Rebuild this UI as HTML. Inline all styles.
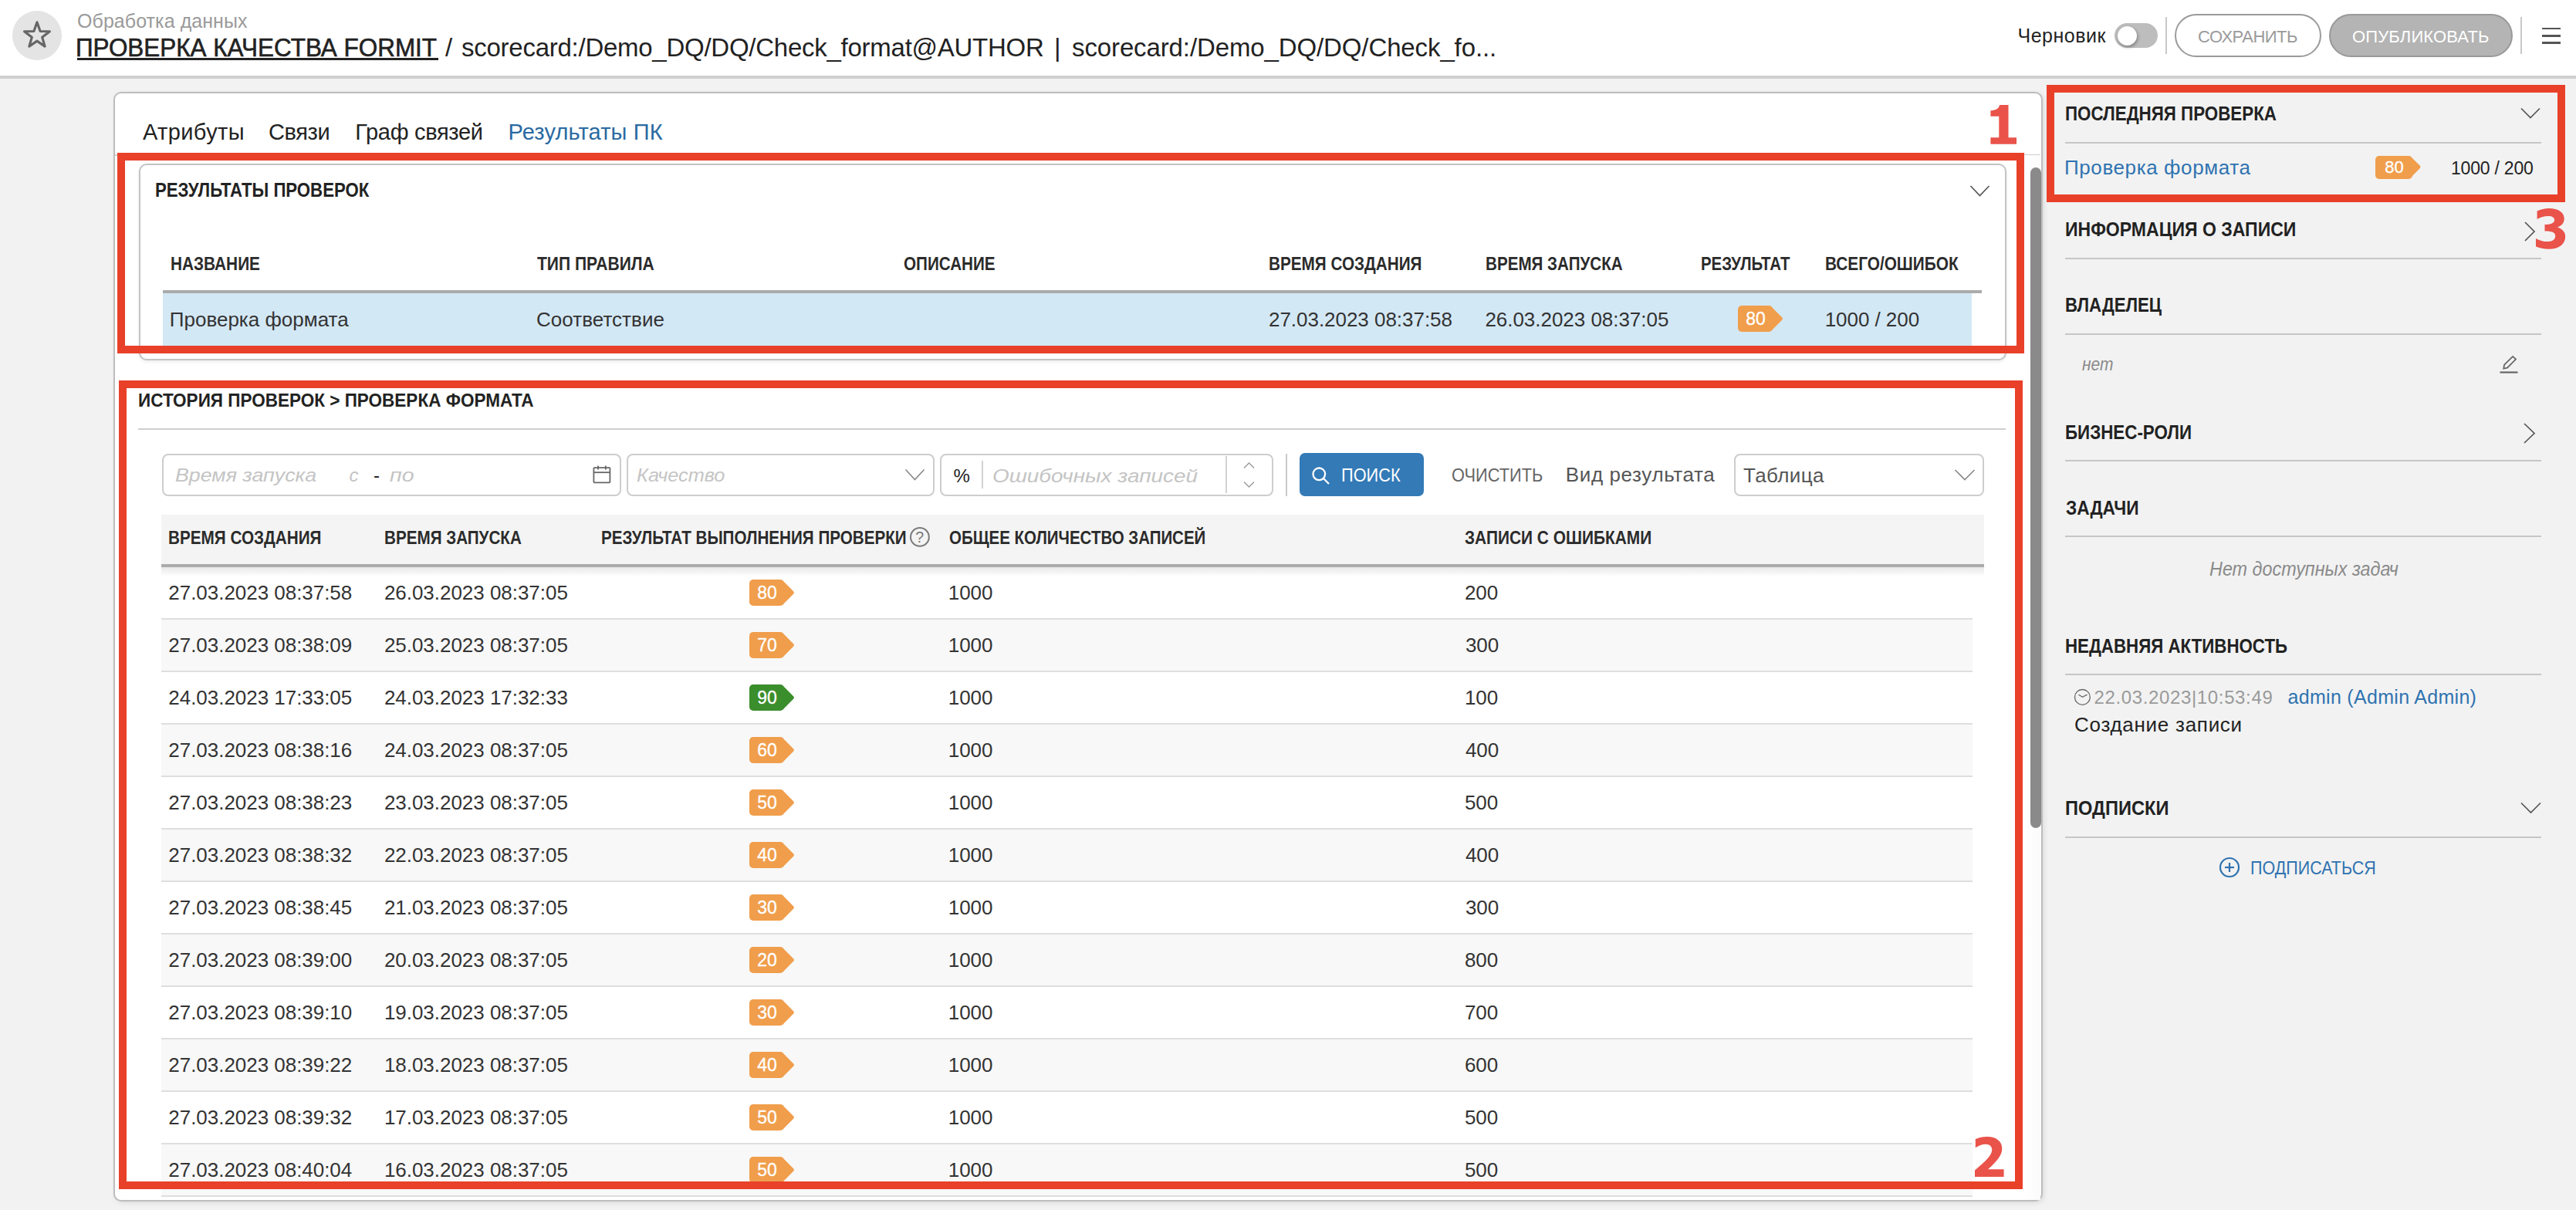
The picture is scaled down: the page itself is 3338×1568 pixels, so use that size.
<!DOCTYPE html>
<html><head><meta charset="utf-8">
<style>
html,body{margin:0;padding:0;}
body{width:3338px;height:1568px;position:relative;overflow:hidden;background:#f2f2f2;font-family:"Liberation Sans",sans-serif;}
.a{position:absolute;box-sizing:border-box;}
.t{position:absolute;white-space:nowrap;font-family:"Liberation Sans",sans-serif;}
.bdg{position:absolute;z-index:0;width:45px;height:34px;border-radius:5px;color:#fff;font:23px/34px "Liberation Sans",sans-serif;-webkit-text-stroke:0.3px #fff;text-align:center;padding-left:1px;box-sizing:border-box;}
.bdg::after{content:"";position:absolute;left:29.5px;top:5px;width:24px;height:24px;transform:rotate(45deg);border-radius:3px;background:inherit;z-index:-1;}
.bdg.o{background:#f09e4c;}
.bdg.b2{width:48px;height:30px;font-size:22px;line-height:30px;border-radius:5px;}
.bdg.b2::after{left:34.4px;top:4.4px;width:21.2px;height:21.2px;}
.bdg.g{background:#3b8e2c;}
.red{position:absolute;box-sizing:border-box;border:10px solid #e9402a;}
svg{position:absolute;overflow:visible;}
</style></head><body>
<!-- header -->
<div class="a" style="left:0;top:0;width:3338px;height:98px;background:#fff;"></div>
<div class="a" style="left:0;top:98px;width:3338px;height:4px;background:#d0d0d0;"></div>
<div class="a" style="left:16px;top:14px;width:64px;height:64px;border-radius:50%;background:#e4e4e4;"></div>
<svg style="left:0;top:0" width="100" height="100"><polygon points="48.00,28.80 52.11,40.44 64.45,40.75 54.66,48.26 58.17,60.10 48.00,53.10 37.83,60.10 41.34,48.26 31.55,40.75 43.89,40.44" fill="none" stroke="#666" stroke-width="3.1" stroke-linejoin="round"/></svg>
<div class="a" style="left:100px;top:75px;width:468px;height:3px;background:#222;"></div>
<!-- toggle -->
<div class="a" style="left:2740px;top:30px;width:56px;height:32px;border-radius:16px;background:#bdbdbd;"></div>
<div class="a" style="left:2743.5px;top:33.5px;width:25px;height:25px;border-radius:50%;background:#fff;box-shadow:1px 2px 4px rgba(0,0,0,.35);"></div>
<div class="a" style="left:2806px;top:22px;width:2px;height:48px;background:#c8c8c8;"></div>
<div class="a" style="left:2818px;top:18px;width:190px;height:56px;border-radius:28px;border:2px solid #9a9a9a;background:#fff;"></div>
<div class="a" style="left:3018px;top:18px;width:238px;height:56px;border-radius:28px;border:2px solid #999;background:#b4b4b4;"></div>
<div class="a" style="left:3266px;top:22px;width:2px;height:48px;background:#c8c8c8;"></div>
<div class="a" style="left:3294px;top:35.5px;width:24px;height:2.5px;background:#555;"></div>
<div class="a" style="left:3294px;top:45px;width:24px;height:2.5px;background:#555;"></div>
<div class="a" style="left:3294px;top:54px;width:24px;height:2.5px;background:#555;"></div>

<!-- right panel shadow -->


<!-- main card -->
<div class="a" style="left:147px;top:119px;width:2500px;height:1438px;border:2px solid #bdbdbd;border-radius:10px;background:#fff;box-shadow:2px 2px 6px rgba(0,0,0,.09);"></div>
<div class="a" style="left:149px;top:199.5px;width:2495px;height:2px;background:#cfcfcf;"></div>
<!-- scroll track -->
<div class="a" style="left:2622px;top:201px;width:22px;height:1354px;background:linear-gradient(to right,#fff,#fbfbfb);"></div>
<div class="a" style="left:2631px;top:217px;width:14px;height:856px;border-radius:7px;background:#8a8a8a;"></div>

<!-- section1 inner card -->
<div class="a" style="left:180px;top:212px;width:2420px;height:255px;border:2px solid #c4c4c4;border-radius:10px;background:#fff;box-shadow:0 2px 4px rgba(0,0,0,.08);"></div>
<div class="a" style="left:211px;top:375.5px;width:2357px;height:4px;background:#ababab;"></div>
<div class="a" style="left:211px;top:379.5px;width:2344px;height:70px;background:#d3e8f5;"></div>
<svg style="left:0;top:0" width="1" height="1"><polyline points="2553.5,241 2565.5,253.5 2577.5,241" fill="none" stroke="#555" stroke-width="1.7"/></svg>

<!-- section2 -->
<div class="a" style="left:179px;top:555px;width:2420px;height:2px;background:#cfcfcf;"></div>
<div class="a" style="left:210px;top:587.5px;width:595px;height:55px;border:2px solid #cdcdcd;border-radius:8px;background:#fff;"></div>
<div class="a" style="left:811.5px;top:587.5px;width:399px;height:55px;border:2px solid #cdcdcd;border-radius:8px;background:#fff;"></div>
<div class="a" style="left:1217.5px;top:587.5px;width:432px;height:55px;border:2px solid #cdcdcd;border-radius:8px;background:#fff;"></div>
<div class="a" style="left:1272px;top:597px;width:2px;height:36px;background:#d2d2d2;"></div>
<div class="a" style="left:1588px;top:591px;width:2px;height:48px;background:#d2d2d2;"></div>
<div class="a" style="left:1666px;top:587.5px;width:2px;height:55px;background:#cbcbcb;"></div>
<div class="a" style="left:1684px;top:587px;width:161px;height:56px;border-radius:7px;background:#337ab7;"></div>
<div class="a" style="left:2246.5px;top:587.5px;width:324px;height:55px;border:2px solid #cdcdcd;border-radius:8px;background:#fff;"></div>
<!-- icons section2 -->
<svg style="left:0;top:0" width="1" height="1">
  <rect x="769.4" y="606.2" width="21" height="19.2" rx="0.8" fill="none" stroke="#666" stroke-width="1.8"/>
  <line x1="769.4" y1="612.2" x2="790.4" y2="612.2" stroke="#666" stroke-width="1.8"/>
  <line x1="775" y1="603.5" x2="775" y2="608.6" stroke="#666" stroke-width="1.8"/>
  <line x1="784.8" y1="603.5" x2="784.8" y2="608.6" stroke="#666" stroke-width="1.8"/>
  <polyline points="1173.5,608.5 1185.5,621.5 1197.5,608.5" fill="none" stroke="#888" stroke-width="1.6"/>
  <polyline points="1612,606.5 1618.5,600 1625,606.5" fill="none" stroke="#999" stroke-width="1.3"/>
  <polyline points="1612,624.5 1618.5,631 1625,624.5" fill="none" stroke="#999" stroke-width="1.3"/>
  <circle cx="1709.3" cy="614.3" r="7.8" fill="none" stroke="#fff" stroke-width="2.3"/>
  <line x1="1715" y1="620" x2="1722" y2="627" stroke="#fff" stroke-width="2.3"/>
  <polyline points="2533.5,609 2546,621.5 2558.5,609" fill="none" stroke="#888" stroke-width="1.6"/>
</svg>
<!-- table header -->
<div class="a" style="left:209px;top:667px;width:2362px;height:64px;background:#f4f4f4;"></div>
<div class="a" style="left:209px;top:731px;width:2362px;height:4px;background:#ababab;"></div>
<div class="a" style="left:209px;top:735px;width:2347px;height:66px;background:#fff;"></div>
<div class="a" style="left:209px;top:801px;width:2347px;height:2px;background:#dedede;"></div>
<div class="a" style="left:209px;top:803px;width:2347px;height:66px;background:#f8f8f8;"></div>
<div class="a" style="left:209px;top:869px;width:2347px;height:2px;background:#dedede;"></div>
<div class="a" style="left:209px;top:871px;width:2347px;height:66px;background:#fff;"></div>
<div class="a" style="left:209px;top:937px;width:2347px;height:2px;background:#dedede;"></div>
<div class="a" style="left:209px;top:939px;width:2347px;height:66px;background:#f8f8f8;"></div>
<div class="a" style="left:209px;top:1005px;width:2347px;height:2px;background:#dedede;"></div>
<div class="a" style="left:209px;top:1007px;width:2347px;height:66px;background:#fff;"></div>
<div class="a" style="left:209px;top:1073px;width:2347px;height:2px;background:#dedede;"></div>
<div class="a" style="left:209px;top:1075px;width:2347px;height:66px;background:#f8f8f8;"></div>
<div class="a" style="left:209px;top:1141px;width:2347px;height:2px;background:#dedede;"></div>
<div class="a" style="left:209px;top:1143px;width:2347px;height:66px;background:#fff;"></div>
<div class="a" style="left:209px;top:1209px;width:2347px;height:2px;background:#dedede;"></div>
<div class="a" style="left:209px;top:1211px;width:2347px;height:66px;background:#f8f8f8;"></div>
<div class="a" style="left:209px;top:1277px;width:2347px;height:2px;background:#dedede;"></div>
<div class="a" style="left:209px;top:1279px;width:2347px;height:66px;background:#fff;"></div>
<div class="a" style="left:209px;top:1345px;width:2347px;height:2px;background:#dedede;"></div>
<div class="a" style="left:209px;top:1347px;width:2347px;height:66px;background:#f8f8f8;"></div>
<div class="a" style="left:209px;top:1413px;width:2347px;height:2px;background:#dedede;"></div>
<div class="a" style="left:209px;top:1415px;width:2347px;height:66px;background:#fff;"></div>
<div class="a" style="left:209px;top:1481px;width:2347px;height:2px;background:#dedede;"></div>
<div class="a" style="left:209px;top:1483px;width:2347px;height:66px;background:#f8f8f8;"></div>
<div class="a" style="left:209px;top:1549px;width:2347px;height:2px;background:#dedede;"></div>
<div class="a" style="left:209px;top:735px;width:2362px;height:12px;background:linear-gradient(to bottom,rgba(0,0,0,.09),rgba(0,0,0,0));"></div>
<div class="bdg o" style="left:971px;top:751px">80</div>
<div class="bdg o" style="left:971px;top:819px">70</div>
<div class="bdg g" style="left:971px;top:887px">90</div>
<div class="bdg o" style="left:971px;top:955px">60</div>
<div class="bdg o" style="left:971px;top:1023px">50</div>
<div class="bdg o" style="left:971px;top:1091px">40</div>
<div class="bdg o" style="left:971px;top:1159px">30</div>
<div class="bdg o" style="left:971px;top:1227px">20</div>
<div class="bdg o" style="left:971px;top:1295px">30</div>
<div class="bdg o" style="left:971px;top:1363px">40</div>
<div class="bdg o" style="left:971px;top:1431px">50</div>
<div class="bdg o" style="left:971px;top:1499px">50</div>
<div class="bdg o" style="left:2252px;top:395.5px">80</div>
<svg style="left:0;top:0" width="1" height="1">
  <circle cx="1191.9" cy="695.9" r="11.9" fill="none" stroke="#7a7a7a" stroke-width="2"/>
  <text x="1191.7" y="703.3" text-anchor="middle" font-family="Liberation Sans" font-size="19.5" fill="#777">?</text>
</svg>

<!-- right panel items -->
<svg style="left:0;top:0" width="1" height="1">
  <polyline points="3267,140.5 3279,152.5 3291,140.5" fill="none" stroke="#555" stroke-width="1.7"/>
  <polyline points="3272,288 3284,300 3272,312" fill="none" stroke="#555" stroke-width="1.7"/>
  <polyline points="3271,549 3284,561.5 3271,574" fill="none" stroke="#555" stroke-width="1.7"/>
  <polyline points="3267,1040.5 3279.5,1053 3292,1040.5" fill="none" stroke="#555" stroke-width="1.7"/>
  <path d="M3244.2,477.6 L3245.1,472.6 L3256.1,461.9 L3260,465.6 L3248.9,476.6 Z" fill="none" stroke="#666" stroke-width="1.8" stroke-linejoin="miter"/>
  <line x1="3239.5" y1="482.5" x2="3262.5" y2="482.5" stroke="#666" stroke-width="2.2"/>
  <circle cx="2698.4" cy="903.4" r="9.9" fill="none" stroke="#666" stroke-width="1.3"/>
  <polyline points="2693.5,900.2 2698.5,903.3 2704.5,900.2" fill="none" stroke="#666" stroke-width="1.3"/>
  <circle cx="2889" cy="1124" r="12" fill="none" stroke="#2f73b0" stroke-width="2.2"/>
  <line x1="2883" y1="1124" x2="2895" y2="1124" stroke="#2f73b0" stroke-width="2.2"/>
  <line x1="2889" y1="1118" x2="2889" y2="1130" stroke="#2f73b0" stroke-width="2.2"/>
</svg>
<div class="a" style="left:2676px;top:184px;width:617px;height:2px;background:#c6c6c6;"></div>
<div class="a" style="left:2676px;top:334px;width:617px;height:2px;background:#c6c6c6;"></div>
<div class="a" style="left:2676px;top:432px;width:617px;height:2px;background:#c6c6c6;"></div>
<div class="a" style="left:2676px;top:596px;width:617px;height:2px;background:#c6c6c6;"></div>
<div class="a" style="left:2676px;top:694px;width:617px;height:2px;background:#c6c6c6;"></div>
<div class="a" style="left:2676px;top:873px;width:617px;height:2px;background:#c6c6c6;"></div>
<div class="a" style="left:2676px;top:1084px;width:617px;height:2px;background:#c6c6c6;"></div>
<div class="bdg o b2" style="left:3078px;top:202px;">80</div>

<div class="t" style="left:100.00px;top:14.50px;font-size:25px;line-height:25px;color:#9a9a9a;letter-spacing:0.060px;">Обработка данных</div>
<div class="t" style="left:98.09px;top:45.00px;font-size:33px;line-height:33px;color:#222;transform:scaleX(0.9528);transform-origin:0 0;-webkit-text-stroke:0.6px #222;">ПРОВЕРКА КАЧЕСТВА FORMIT</div>
<div class="t" style="left:577.00px;top:45.00px;font-size:33px;line-height:33px;color:#222;">/</div>
<div class="t" style="left:598.00px;top:45.00px;font-size:33px;line-height:33px;color:#222;letter-spacing:-0.259px;">scorecard:/Demo_DQ/DQ/Check_format@AUTHOR</div>
<div class="t" style="left:1366.00px;top:45.00px;font-size:33px;line-height:33px;color:#222;">|</div>
<div class="t" style="left:1389.00px;top:45.00px;font-size:33px;line-height:33px;color:#222;letter-spacing:-0.115px;">scorecard:/Demo_DQ/DQ/Check_fo...</div>
<div class="t" style="left:2614.50px;top:33.50px;font-size:25px;line-height:25px;color:#222;letter-spacing:0.511px;">Черновик</div>
<div class="t" style="left:2848.00px;top:36.50px;font-size:22px;line-height:22px;color:#9a9a9a;letter-spacing:-0.527px;">СОХРАНИТЬ</div>
<div class="t" style="left:3048.00px;top:36.50px;font-size:22px;line-height:22px;color:#fff;letter-spacing:0.127px;">ОПУБЛИКОВАТЬ</div>
<div class="t" style="left:185.00px;top:156.70px;font-size:29px;line-height:29px;color:#222;letter-spacing:0.376px;">Атрибуты</div>
<div class="t" style="left:348.00px;top:156.70px;font-size:29px;line-height:29px;color:#222;letter-spacing:-0.381px;">Связи</div>
<div class="t" style="left:460.30px;top:156.70px;font-size:29px;line-height:29px;color:#222;letter-spacing:-0.313px;">Граф связей</div>
<div class="t" style="left:658.50px;top:156.70px;font-size:29px;line-height:29px;color:#2a6aa2;letter-spacing:0.131px;">Результаты ПК</div>
<div class="t" style="left:200.91px;top:233.50px;font-size:25px;line-height:25px;color:#222;font-weight:700;transform:scaleX(0.8875);transform-origin:0 0;">РЕЗУЛЬТАТЫ ПРОВЕРОК</div>
<div class="t" style="left:220.91px;top:330.55px;font-size:23.5px;line-height:23.5px;color:#2b2b2b;font-weight:700;transform:scaleX(0.8856);transform-origin:0 0;">НАЗВАНИЕ</div>
<div class="t" style="left:696.00px;top:330.55px;font-size:23.5px;line-height:23.5px;color:#2b2b2b;font-weight:700;transform:scaleX(0.8956);transform-origin:0 0;">ТИП ПРАВИЛА</div>
<div class="t" style="left:1170.90px;top:330.55px;font-size:23.5px;line-height:23.5px;color:#2b2b2b;font-weight:700;transform:scaleX(0.8788);transform-origin:0 0;">ОПИСАНИЕ</div>
<div class="t" style="left:1644.12px;top:330.55px;font-size:23.5px;line-height:23.5px;color:#2b2b2b;font-weight:700;transform:scaleX(0.8814);transform-origin:0 0;">ВРЕМЯ СОЗДАНИЯ</div>
<div class="t" style="left:1924.52px;top:330.55px;font-size:23.5px;line-height:23.5px;color:#2b2b2b;font-weight:700;transform:scaleX(0.8773);transform-origin:0 0;">ВРЕМЯ ЗАПУСКА</div>
<div class="t" style="left:2204.13px;top:330.55px;font-size:23.5px;line-height:23.5px;color:#2b2b2b;font-weight:700;transform:scaleX(0.8689);transform-origin:0 0;">РЕЗУЛЬТАТ</div>
<div class="t" style="left:2364.81px;top:330.55px;font-size:23.5px;line-height:23.5px;color:#2b2b2b;font-weight:700;transform:scaleX(0.8859);transform-origin:0 0;">ВСЕГО/ОШИБОК</div>
<div class="t" style="left:219.80px;top:400.50px;font-size:26px;line-height:26px;color:#333;">Проверка формата</div>
<div class="t" style="left:695.00px;top:400.50px;font-size:26px;line-height:26px;color:#333;letter-spacing:0.044px;">Соответствие</div>
<div class="t" style="left:1644.00px;top:400.50px;font-size:26px;line-height:26px;color:#333;letter-spacing:-0.033px;">27.03.2023 08:37:58</div>
<div class="t" style="left:1924.40px;top:400.50px;font-size:26px;line-height:26px;color:#333;letter-spacing:-0.033px;">26.03.2023 08:37:05</div>
<div class="t" style="left:2364.70px;top:400.50px;font-size:26px;line-height:26px;color:#333;letter-spacing:-0.048px;">1000 / 200</div>
<div class="t" style="left:178.68px;top:506.75px;font-size:24.5px;line-height:24.5px;color:#222;font-weight:700;transform:scaleX(0.9193);transform-origin:0 0;">ИСТОРИЯ ПРОВЕРОК > ПРОВЕРКА ФОРМАТА</div>
<div class="t" style="left:227.30px;top:603.70px;font-size:24px;line-height:24px;color:#c4c4c4;font-style:italic;transform:scaleX(1.1148);transform-origin:0 0;">Время запуска</div>
<div class="t" style="left:452.40px;top:603.70px;font-size:24px;line-height:24px;color:#c4c4c4;font-style:italic;">с</div>
<div class="t" style="left:484.00px;top:603.70px;font-size:24px;line-height:24px;color:#222;">-</div>
<div class="t" style="left:504.80px;top:603.70px;font-size:24px;line-height:24px;color:#c4c4c4;font-style:italic;transform:scaleX(1.1905);transform-origin:0 0;">по</div>
<div class="t" style="left:825.40px;top:603.70px;font-size:24px;line-height:24px;color:#c4c4c4;font-style:italic;transform:scaleX(1.0519);transform-origin:0 0;">Качество</div>
<div class="t" style="left:1235.60px;top:604.70px;font-size:24px;line-height:24px;color:#222;">%</div>
<div class="t" style="left:1286.44px;top:604.70px;font-size:24px;line-height:24px;color:#c4c4c4;font-style:italic;transform:scaleX(1.1620);transform-origin:0 0;">Ошибочных записей</div>
<div class="t" style="left:1738.09px;top:603.50px;font-size:24px;line-height:24px;color:#fff;transform:scaleX(0.9066);transform-origin:0 0;">ПОИСК</div>
<div class="t" style="left:1881.09px;top:603.50px;font-size:24px;line-height:24px;color:#666;transform:scaleX(0.9082);transform-origin:0 0;">ОЧИСТИТЬ</div>
<div class="t" style="left:2028.80px;top:602.00px;font-size:26px;line-height:26px;color:#555;letter-spacing:0.617px;">Вид результата</div>
<div class="t" style="left:2259.00px;top:603.00px;font-size:26px;line-height:26px;color:#555;letter-spacing:0.419px;">Таблица</div>
<div class="t" style="left:217.92px;top:686.25px;font-size:23.5px;line-height:23.5px;color:#2b2b2b;font-weight:700;transform:scaleX(0.8814);transform-origin:0 0;">ВРЕМЯ СОЗДАНИЯ</div>
<div class="t" style="left:498.02px;top:686.25px;font-size:23.5px;line-height:23.5px;color:#2b2b2b;font-weight:700;transform:scaleX(0.8783);transform-origin:0 0;">ВРЕМЯ ЗАПУСКА</div>
<div class="t" style="left:778.52px;top:686.25px;font-size:23.5px;line-height:23.5px;color:#2b2b2b;font-weight:700;transform:scaleX(0.8782);transform-origin:0 0;">РЕЗУЛЬТАТ ВЫПОЛНЕНИЯ ПРОВЕРКИ</div>
<div class="t" style="left:1229.50px;top:686.25px;font-size:23.5px;line-height:23.5px;color:#2b2b2b;font-weight:700;transform:scaleX(0.8716);transform-origin:0 0;">ОБЩЕЕ КОЛИЧЕСТВО ЗАПИСЕЙ</div>
<div class="t" style="left:1898.30px;top:686.25px;font-size:23.5px;line-height:23.5px;color:#2b2b2b;font-weight:700;transform:scaleX(0.8887);transform-origin:0 0;">ЗАПИСИ С ОШИБКАМИ</div>
<div class="t" style="left:218.30px;top:755.10px;font-size:26px;line-height:26px;color:#333;letter-spacing:-0.033px;">27.03.2023 08:37:58</div>
<div class="t" style="left:497.90px;top:755.10px;font-size:26px;line-height:26px;color:#333;letter-spacing:-0.033px;">26.03.2023 08:37:05</div>
<div class="t" style="left:1228.70px;top:755.10px;font-size:26px;line-height:26px;color:#333;">1000</div>
<div class="t" style="left:1897.90px;top:755.10px;font-size:26px;line-height:26px;color:#333;">200</div>
<div class="t" style="left:218.30px;top:823.10px;font-size:26px;line-height:26px;color:#333;letter-spacing:-0.033px;">27.03.2023 08:38:09</div>
<div class="t" style="left:497.90px;top:823.10px;font-size:26px;line-height:26px;color:#333;letter-spacing:-0.033px;">25.03.2023 08:37:05</div>
<div class="t" style="left:1228.70px;top:823.10px;font-size:26px;line-height:26px;color:#333;">1000</div>
<div class="t" style="left:1898.90px;top:823.10px;font-size:26px;line-height:26px;color:#333;">300</div>
<div class="t" style="left:218.30px;top:891.10px;font-size:26px;line-height:26px;color:#333;letter-spacing:-0.033px;">24.03.2023 17:33:05</div>
<div class="t" style="left:497.90px;top:891.10px;font-size:26px;line-height:26px;color:#333;letter-spacing:-0.033px;">24.03.2023 17:32:33</div>
<div class="t" style="left:1228.70px;top:891.10px;font-size:26px;line-height:26px;color:#333;">1000</div>
<div class="t" style="left:1897.90px;top:891.10px;font-size:26px;line-height:26px;color:#333;">100</div>
<div class="t" style="left:218.30px;top:959.10px;font-size:26px;line-height:26px;color:#333;letter-spacing:-0.033px;">27.03.2023 08:38:16</div>
<div class="t" style="left:497.90px;top:959.10px;font-size:26px;line-height:26px;color:#333;letter-spacing:-0.033px;">24.03.2023 08:37:05</div>
<div class="t" style="left:1228.70px;top:959.10px;font-size:26px;line-height:26px;color:#333;">1000</div>
<div class="t" style="left:1898.90px;top:959.10px;font-size:26px;line-height:26px;color:#333;">400</div>
<div class="t" style="left:218.30px;top:1027.10px;font-size:26px;line-height:26px;color:#333;letter-spacing:-0.033px;">27.03.2023 08:38:23</div>
<div class="t" style="left:497.90px;top:1027.10px;font-size:26px;line-height:26px;color:#333;letter-spacing:-0.033px;">23.03.2023 08:37:05</div>
<div class="t" style="left:1228.70px;top:1027.10px;font-size:26px;line-height:26px;color:#333;">1000</div>
<div class="t" style="left:1897.90px;top:1027.10px;font-size:26px;line-height:26px;color:#333;">500</div>
<div class="t" style="left:218.30px;top:1095.10px;font-size:26px;line-height:26px;color:#333;letter-spacing:-0.033px;">27.03.2023 08:38:32</div>
<div class="t" style="left:497.90px;top:1095.10px;font-size:26px;line-height:26px;color:#333;letter-spacing:-0.033px;">22.03.2023 08:37:05</div>
<div class="t" style="left:1228.70px;top:1095.10px;font-size:26px;line-height:26px;color:#333;">1000</div>
<div class="t" style="left:1898.90px;top:1095.10px;font-size:26px;line-height:26px;color:#333;">400</div>
<div class="t" style="left:218.30px;top:1163.10px;font-size:26px;line-height:26px;color:#333;letter-spacing:-0.033px;">27.03.2023 08:38:45</div>
<div class="t" style="left:497.90px;top:1163.10px;font-size:26px;line-height:26px;color:#333;letter-spacing:-0.033px;">21.03.2023 08:37:05</div>
<div class="t" style="left:1228.70px;top:1163.10px;font-size:26px;line-height:26px;color:#333;">1000</div>
<div class="t" style="left:1898.90px;top:1163.10px;font-size:26px;line-height:26px;color:#333;">300</div>
<div class="t" style="left:218.30px;top:1231.10px;font-size:26px;line-height:26px;color:#333;letter-spacing:-0.033px;">27.03.2023 08:39:00</div>
<div class="t" style="left:497.90px;top:1231.10px;font-size:26px;line-height:26px;color:#333;letter-spacing:-0.033px;">20.03.2023 08:37:05</div>
<div class="t" style="left:1228.70px;top:1231.10px;font-size:26px;line-height:26px;color:#333;">1000</div>
<div class="t" style="left:1897.90px;top:1231.10px;font-size:26px;line-height:26px;color:#333;">800</div>
<div class="t" style="left:218.30px;top:1299.10px;font-size:26px;line-height:26px;color:#333;letter-spacing:-0.033px;">27.03.2023 08:39:10</div>
<div class="t" style="left:497.90px;top:1299.10px;font-size:26px;line-height:26px;color:#333;letter-spacing:-0.033px;">19.03.2023 08:37:05</div>
<div class="t" style="left:1228.70px;top:1299.10px;font-size:26px;line-height:26px;color:#333;">1000</div>
<div class="t" style="left:1897.90px;top:1299.10px;font-size:26px;line-height:26px;color:#333;">700</div>
<div class="t" style="left:218.30px;top:1367.10px;font-size:26px;line-height:26px;color:#333;letter-spacing:-0.033px;">27.03.2023 08:39:22</div>
<div class="t" style="left:497.90px;top:1367.10px;font-size:26px;line-height:26px;color:#333;letter-spacing:-0.033px;">18.03.2023 08:37:05</div>
<div class="t" style="left:1228.70px;top:1367.10px;font-size:26px;line-height:26px;color:#333;">1000</div>
<div class="t" style="left:1897.90px;top:1367.10px;font-size:26px;line-height:26px;color:#333;">600</div>
<div class="t" style="left:218.30px;top:1435.10px;font-size:26px;line-height:26px;color:#333;letter-spacing:-0.033px;">27.03.2023 08:39:32</div>
<div class="t" style="left:497.90px;top:1435.10px;font-size:26px;line-height:26px;color:#333;letter-spacing:-0.033px;">17.03.2023 08:37:05</div>
<div class="t" style="left:1228.70px;top:1435.10px;font-size:26px;line-height:26px;color:#333;">1000</div>
<div class="t" style="left:1897.90px;top:1435.10px;font-size:26px;line-height:26px;color:#333;">500</div>
<div class="t" style="left:218.30px;top:1503.10px;font-size:26px;line-height:26px;color:#333;letter-spacing:-0.033px;">27.03.2023 08:40:04</div>
<div class="t" style="left:497.90px;top:1503.10px;font-size:26px;line-height:26px;color:#333;letter-spacing:-0.033px;">16.03.2023 08:37:05</div>
<div class="t" style="left:1228.70px;top:1503.10px;font-size:26px;line-height:26px;color:#333;">1000</div>
<div class="t" style="left:1897.90px;top:1503.10px;font-size:26px;line-height:26px;color:#333;">500</div>
<div class="t" style="left:2676.11px;top:134.70px;font-size:25px;line-height:25px;color:#222;font-weight:700;transform:scaleX(0.8944);transform-origin:0 0;">ПОСЛЕДНЯЯ ПРОВЕРКА</div>
<div class="t" style="left:2675.00px;top:203.60px;font-size:26px;line-height:26px;color:#2f73b0;letter-spacing:0.602px;">Проверка формата</div>
<div class="t" style="left:3176.00px;top:206.50px;font-size:23px;line-height:23px;color:#222;letter-spacing:-0.213px;">1000 / 200</div>
<div class="t" style="left:2676.31px;top:283.90px;font-size:26px;line-height:26px;color:#222;font-weight:700;transform:scaleX(0.8860);transform-origin:0 0;">ИНФОРМАЦИЯ О ЗАПИСИ</div>
<div class="t" style="left:2676.15px;top:382.00px;font-size:26px;line-height:26px;color:#222;font-weight:700;transform:scaleX(0.8532);transform-origin:0 0;">ВЛАДЕЛЕЦ</div>
<div class="t" style="left:2698.00px;top:459.50px;font-size:24px;line-height:24px;color:#8a8a8a;font-style:italic;transform:scaleX(0.8745);transform-origin:0 0;">нет</div>
<div class="t" style="left:2676.14px;top:546.70px;font-size:26px;line-height:26px;color:#222;font-weight:700;transform:scaleX(0.8605);transform-origin:0 0;">БИЗНЕС-РОЛИ</div>
<div class="t" style="left:2677.00px;top:645.00px;font-size:26px;line-height:26px;color:#222;font-weight:700;transform:scaleX(0.8723);transform-origin:0 0;">ЗАДАЧИ</div>
<div class="t" style="left:2863.00px;top:724.50px;font-size:25px;line-height:25px;color:#8a8a8a;font-style:italic;transform:scaleX(0.9348);transform-origin:0 0;">Нет доступных задач</div>
<div class="t" style="left:2676.14px;top:823.50px;font-size:26px;line-height:26px;color:#222;font-weight:700;transform:scaleX(0.8575);transform-origin:0 0;">НЕДАВНЯЯ АКТИВНОСТЬ</div>
<div class="t" style="left:2713.50px;top:892.20px;font-size:24px;line-height:24px;color:#9a9a9a;letter-spacing:0.637px;">22.03.2023|10:53:49</div>
<div class="t" style="left:2964.50px;top:891.20px;font-size:25px;line-height:25px;color:#2f73b0;letter-spacing:0.304px;">admin (Admin Admin)</div>
<div class="t" style="left:2688.00px;top:926.00px;font-size:26px;line-height:26px;color:#222;letter-spacing:0.723px;">Создание записи</div>
<div class="t" style="left:2676.09px;top:1034.00px;font-size:26px;line-height:26px;color:#222;font-weight:700;transform:scaleX(0.9096);transform-origin:0 0;">ПОДПИСКИ</div>
<div class="t" style="left:2915.50px;top:1113.30px;font-size:24px;line-height:24px;color:#2f73b0;transform:scaleX(0.8957);transform-origin:0 0;">ПОДПИСАТЬСЯ</div>

<svg style="left:0;top:0" width="1" height="1"><g fill="#e9534a">
<path d="M2579.4,143.3 C2585,143.3 2590.5,141 2591,136 L2602.5,136 L2602.5,178.2 L2613,178.2 L2613,186.8 L2579.4,186.8 L2579.4,178.2 L2590.3,178.2 L2590.3,150.8 L2579.4,150.8 Z"/>
<path d="M2559.8,1476.3 C2564.5,1474.2 2569.5,1473.1 2575,1473.1 C2586.5,1473.1 2594.3,1479 2594.3,1488.5 C2594.3,1497 2588,1504.5 2576,1515.3 L2596.6,1515.3 L2596.6,1524.9 L2559,1524.9 L2559,1516.5 C2572,1505.5 2581.25,1497.5 2581.25,1490 C2581.25,1485.5 2578,1482.7 2573,1482.7 C2568.5,1482.7 2564,1484.7 2559.8,1487.3 Z"/>
<path d="M3287.6,273.5 C3292.5,271.3 3297.5,270.1 3303,270.1 C3315,270.1 3322.75,275.5 3322.75,283.3 C3322.75,289 3319,293 3313.8,294.5 C3320.5,296.5 3324.2,301 3324.2,306.4 C3324.2,316.5 3315.5,322.7 3303,322.7 C3296.5,322.7 3290.5,321.5 3286,319.6 L3286,308.9 C3290.5,311.5 3295.5,313.1 3300.8,313.1 C3307.5,313.1 3311.2,310.5 3311.2,305.8 C3311.2,301.5 3307.5,299.6 3300,299.6 L3297.5,299.6 L3297.5,290.9 L3300,290.9 C3306.5,290.9 3310.1,288.6 3310.1,285.1 C3310.1,281.8 3307,279.9 3302,279.9 C3297,279.9 3292.5,281.5 3287.6,283.9 Z"/>
</g></svg>
<!-- red annotation boxes -->
<div class="red" style="left:152px;top:198px;width:2471px;height:260px;"></div>
<div class="red" style="left:154px;top:493px;width:2467px;height:1048px;"></div>
<div class="red" style="left:2652px;top:110px;width:672px;height:152px;"></div>
</body></html>
